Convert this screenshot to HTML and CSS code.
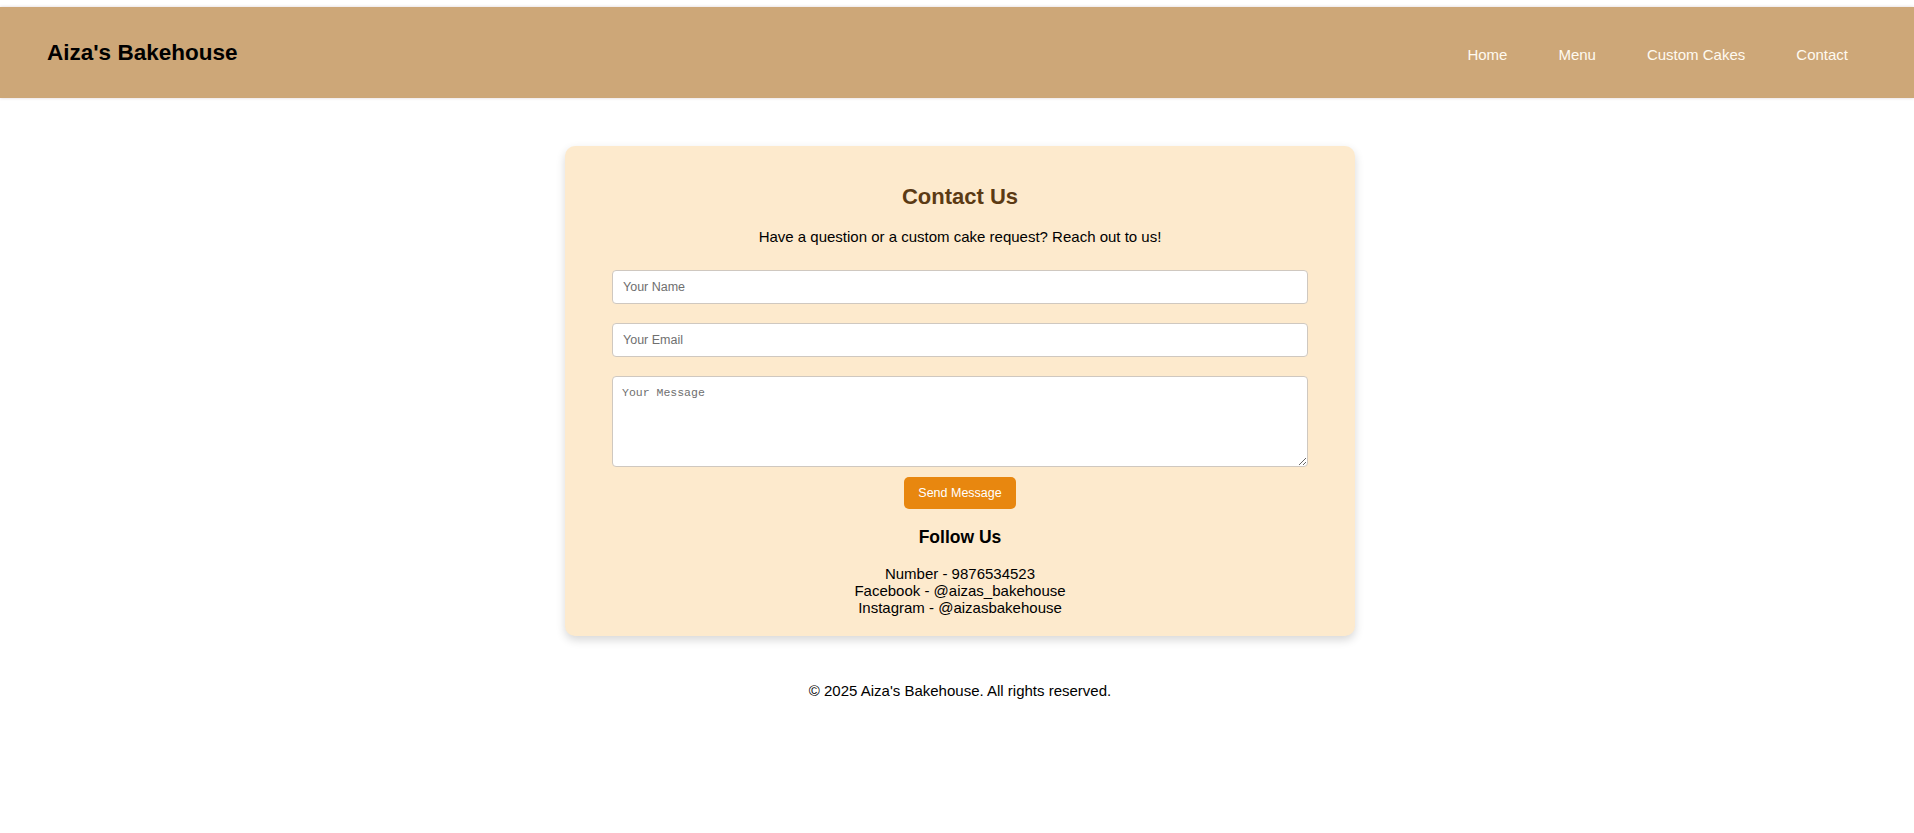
FILE: index.html
```html
<!DOCTYPE html>
<html lang="en">
<head>
<meta charset="utf-8">
<title>Contact - Aiza's Bakehouse</title>
<link rel="stylesheet" href="styles.css">
</head>
<body>
<header class="site-header">
  <div class="brand">Aiza's Bakehouse</div>
  <nav class="nav">
    <a href="#" class="nav-link">Home</a>
    <a href="#" class="nav-link">Menu</a>
    <a href="#" class="nav-link">Custom Cakes</a>
    <a href="#" class="nav-link">Contact</a>
  </nav>
</header>
<div class="page">
  <main class="main">
    <section class="card">
      <h2 class="card-title">Contact Us</h2>
      <p class="card-sub">Have a question or a custom cake request? Reach out to us!</p>
      <form class="form">
        <input class="field" type="text" placeholder="Your Name">
        <input class="field" type="email" placeholder="Your Email">
        <textarea class="field-area" placeholder="Your Message"></textarea>
        <button type="button" class="btn">Send Message</button>
      </form>
      <h3 class="follow-title">Follow Us</h3>
      <div class="follow-list">
        Number - 9876534523<br>
        Facebook - @aizas_bakehouse<br>
        Instagram - @aizasbakehouse
      </div>
    </section>
  </main>
  <footer class="footer">© 2025 Aiza's Bakehouse. All rights reserved.</footer>
</div>
</body>
</html>
```
FILE: styles.css
```css
* { box-sizing: border-box; }

html, body {
  margin: 0;
  padding: 0;
  background: #ffffff;
}

body {
  font-family: "Liberation Sans", Arial, sans-serif;
  font-size: 15px;
  color: #000;
}

.site-header {
  margin-top: 7px;
  height: 91px;
  background: #cda778;
  box-shadow: 0 0 3px rgba(120, 80, 90, 0.25);
  display: flex;
  align-items: center;
  justify-content: space-between;
  padding: 0 66px 0 47px;
}

.brand {
  font-size: 22.5px;
  font-weight: bold;
  color: #000;
}

.nav {
  display: flex;
  gap: 51px;
  padding-top: 4px;
}

.nav-link {
  color: #fffaf0;
  text-decoration: none;
  font-size: 15px;
}

.page {
  padding-left: 6px;
}

.main {
  display: flex;
  justify-content: center;
  padding-top: 48px;
}

.card {
  width: 790px;
  background: #fdeacd;
  border-radius: 10px;
  box-shadow: 0 4px 10px rgba(0, 0, 0, 0.16);
  padding: 20px 47px;
  text-align: center;
}

.card-title {
  margin: 18px 0 18px;
  font-size: 22px;
  font-weight: bold;
  color: #5b3a14;
}

.card-sub {
  margin: 0 0 25px;
  font-size: 15px;
}

.form {
  display: flex;
  flex-direction: column;
  align-items: center;
}

.field {
  width: 100%;
  height: 34px;
  margin: 0 0 19px;
  padding: 0 10px;
  border: 1px solid #cfc8c0;
  border-radius: 4px;
  background: #fff;
  font-family: "Liberation Sans", Arial, sans-serif;
  font-size: 12.5px;
  color: #333;
}

.field::placeholder,
.field-area::placeholder {
  color: #6f6f6f;
}

.field-area {
  width: 100%;
  height: 91px;
  margin: 0 0 10px;
  padding: 9px 9px;
  border: 1px solid #cfc8c0;
  border-radius: 4px;
  background: #fff;
  font-family: "Liberation Mono", monospace;
  font-size: 11.5px;
  resize: vertical;
}

.btn {
  height: 32px;
  width: 112px;
  border: none;
  border-radius: 5px;
  background: #e8870f;
  color: #fff;
  font-family: "Liberation Sans", Arial, sans-serif;
  font-size: 12.5px;
  cursor: pointer;
}

.follow-title {
  margin: 18px 0 17px;
  font-size: 17.5px;
  font-weight: bold;
}

.follow-list {
  font-size: 15px;
  line-height: 17px;
}

.footer {
  text-align: center;
  padding-top: 46px;
  font-size: 15px;
}
```
